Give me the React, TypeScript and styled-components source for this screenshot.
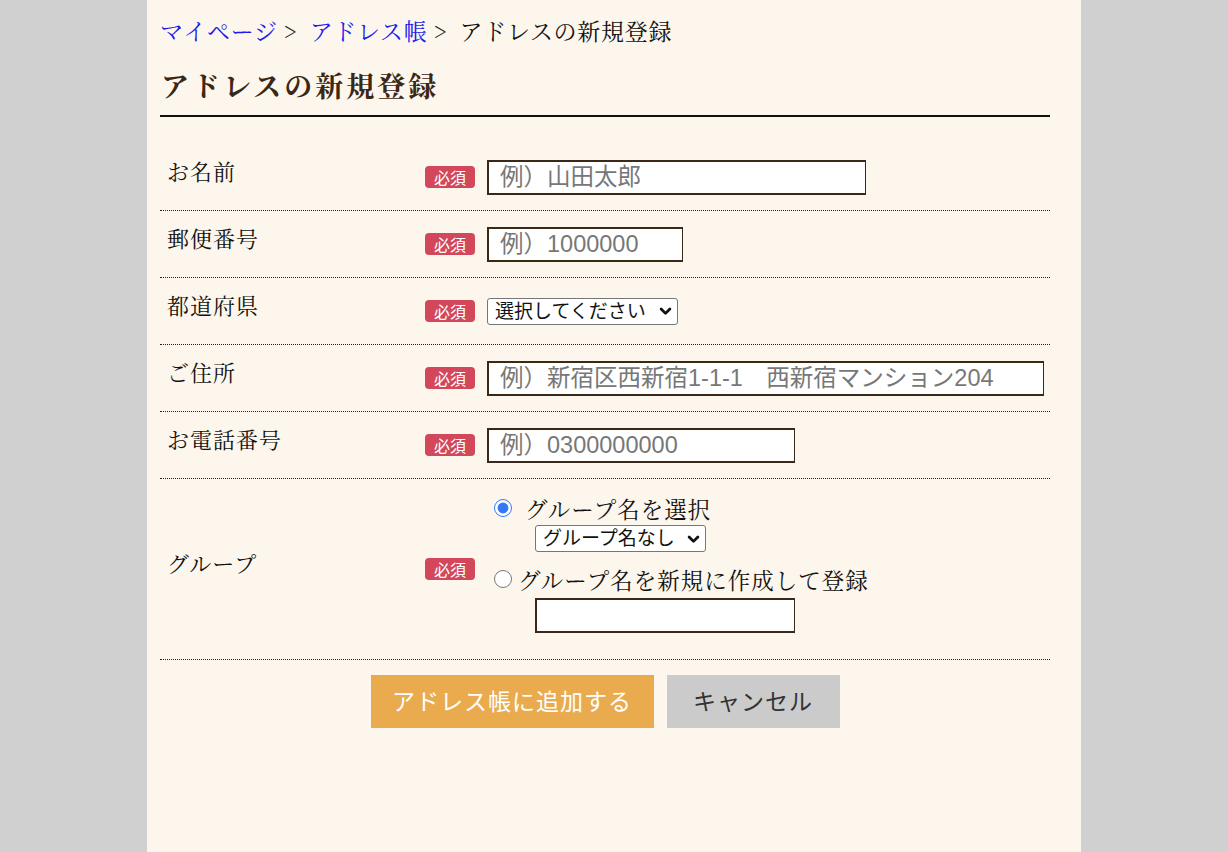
import React from "react";
import styled, { createGlobalStyle } from "styled-components";

const Global = createGlobalStyle`
  html, body { margin: 0; padding: 0; }
  body {
    background: #d0d0d0;
    font-family: "Noto Serif CJK JP", "Noto Sans CJK JP", serif;
    color: #111;
  }
`;

const serif = `"Noto Serif CJK JP", "Noto Sans CJK JP", serif`;
const sans = `"Liberation Sans", "Noto Sans CJK JP", sans-serif`;

const Page = styled.div`
  width: 934px;
  min-height: 852px;
  margin: 0 auto;
  background: #fdf6ec;
  padding: 13px 31px 40px 13px;
  box-sizing: border-box;
`;

const Breadcrumb = styled.nav`
  font-family: ${serif};
  font-size: 23px;
  line-height: 36px;
  color: #111;
  letter-spacing: 0.7px;
`;

const Crumb = styled.a`
  color: #1a1aee;
  text-decoration: none;
`;

const Sep = styled.span`
  margin: 0 12px 0 6px;
`;

const Title = styled.h1`
  margin: 16px 0 0;
  padding: 0 0 10px 1px;
  font-family: ${serif};
  font-size: 28px;
  line-height: 40px;
  font-weight: 700;
  letter-spacing: 3px;
  color: #3b2716;
  border-bottom: 2px solid #111;
`;

const Form = styled.form`
  margin-top: 27px;
`;

const Row = styled.div<{ $h: number }>`
  display: grid;
  grid-template-columns: 253px 50px 1fr;
  column-gap: 12px;
  align-items: center;
  min-height: ${(p) => p.$h}px;
  border-bottom: 1px dotted #222;
`;

const Label = styled.div`
  padding: 0 0 12px 7px;
  font-family: ${serif};
  font-size: 22px;
  line-height: 30px;
  letter-spacing: 1px;
  color: #111;
`;

const Badge = styled.span`
  display: inline-flex;
  align-items: center;
  justify-content: center;
  width: 50px;
  height: 22px;
  border-radius: 4px;
  background: #d2475a;
  color: #fff;
  font-family: "Noto Sans CJK JP", sans-serif;
  font-size: 16px;
  line-height: 22px;
`;

const Field = styled.div`
  display: flex;
  flex-direction: column;
  align-items: flex-start;
`;

const TextInput = styled.input<{ $w: number }>`
  width: ${(p) => p.$w}px;
  height: 35px;
  box-sizing: border-box;
  border: 2px solid #3a2818;
  border-right-width: 1.5px;
  background: #fff;
  padding: 0 11px;
  font-family: ${sans};
  font-size: 23.5px;
  color: #222;
  outline: none;
  &::placeholder {
    color: #777;
  }
`;

const SelectWrap = styled.div`
  position: relative;
  display: inline-block;
`;

const Select = styled.select<{ $w: number }>`
  appearance: none;
  -webkit-appearance: none;
  display: block;
  width: ${(p) => p.$w}px;
  height: 27px;
  box-sizing: border-box;
  font-family: ${sans};
  font-size: 19px;
  color: #111;
  background: #fff;
  border: 1px solid #767676;
  border-radius: 3px;
  padding: 0 22px 0 7px;
  outline: none;
`;

const Chevron = styled.svg`
  position: absolute;
  right: 5px;
  top: 50%;
  width: 15px;
  height: 15px;
  margin-top: -7px;
  pointer-events: none;
`;

const RadioLine = styled.label<{ $gap: number }>`
  display: flex;
  align-items: center;
  font-family: ${serif};
  font-size: 22.5px;
  line-height: 30px;
  letter-spacing: 1px;
  color: #111;
  input {
    width: 18px;
    height: 18px;
    margin: 0 ${(p) => p.$gap}px 0 7px;
    accent-color: #3478f6;
  }
`;

const Indent = styled.div<{ $mt: number }>`
  margin: ${(p) => p.$mt}px 0 0 48px;
`;

const GroupField = styled(Field)`
  padding: 14px 0 26px;
`;

const Buttons = styled.div`
  display: flex;
  justify-content: center;
  gap: 13px;
  padding-top: 15px;
`;

const Button = styled.button<{ $primary?: boolean; $w: number }>`
  width: ${(p) => p.$w}px;
  height: 53px;
  border: none;
  padding: 0 0 4px;
  background: ${(p) => (p.$primary ? "#eaab4e" : "#cbcbcb")};
  color: ${(p) => (p.$primary ? "#fff" : "#333")};
  font-family: "Noto Sans CJK JP", sans-serif;
  font-size: 23px;
  letter-spacing: 1px;
  cursor: pointer;
`;

function Dropdown({ w, children, value }: { w: number; value: string; children: React.ReactNode }) {
  return (
    <SelectWrap>
      <Select $w={w} defaultValue={value}>
        {children}
      </Select>
      <Chevron viewBox="0 0 24 24" fill="none" stroke="#111" strokeWidth={4.5} strokeLinecap="round" strokeLinejoin="round">
        <path d="M5 8l7 7 7-7" />
      </Chevron>
    </SelectWrap>
  );
}

export default function App() {
  return (
    <>
      <Global />
      <Page>
        <Breadcrumb>
          <Crumb href="#">マイページ</Crumb>
          <Sep>&gt;</Sep>
          <Crumb href="#">アドレス帳</Crumb>
          <Sep>&gt;</Sep>
          アドレスの新規登録
        </Breadcrumb>
        <Title>アドレスの新規登録</Title>
        <Form onSubmit={(e) => e.preventDefault()}>
          <Row $h={66}>
            <Label>お名前</Label>
            <Badge>必須</Badge>
            <Field>
              <TextInput $w={379} placeholder="例）山田太郎" />
            </Field>
          </Row>
          <Row $h={66}>
            <Label>郵便番号</Label>
            <Badge>必須</Badge>
            <Field>
              <TextInput $w={196} placeholder="例）1000000" />
            </Field>
          </Row>
          <Row $h={66}>
            <Label>都道府県</Label>
            <Badge>必須</Badge>
            <Field>
              <Dropdown w={191} value="">
                <option value="">選択してください</option>
                <option>東京都</option>
              </Dropdown>
            </Field>
          </Row>
          <Row $h={66}>
            <Label>ご住所</Label>
            <Badge>必須</Badge>
            <Field>
              <TextInput $w={557} placeholder="例）新宿区西新宿1-1-1　西新宿マンション204" />
            </Field>
          </Row>
          <Row $h={66}>
            <Label>お電話番号</Label>
            <Badge>必須</Badge>
            <Field>
              <TextInput $w={308} placeholder="例）0300000000" />
            </Field>
          </Row>
          <Row $h={180}>
            <Label>グループ</Label>
            <Badge>必須</Badge>
            <GroupField>
              <RadioLine $gap={13}>
                <input type="radio" name="group" defaultChecked />
                グループ名を選択
              </RadioLine>
              <Indent $mt={2}>
                <Dropdown w={171} value="none">
                  <option value="none">グループ名なし</option>
                </Dropdown>
              </Indent>
              <RadioLine $gap={6} style={{ marginTop: 12 }}>
                <input type="radio" name="group" />
                グループ名を新規に作成して登録
              </RadioLine>
              <Indent $mt={4}>
                <TextInput $w={260} />
              </Indent>
            </GroupField>
          </Row>
          <Buttons>
            <Button type="submit" $primary $w={283}>
              アドレス帳に追加する
            </Button>
            <Button type="button" $w={173}>
              キャンセル
            </Button>
          </Buttons>
        </Form>
      </Page>
    </>
  );
}
